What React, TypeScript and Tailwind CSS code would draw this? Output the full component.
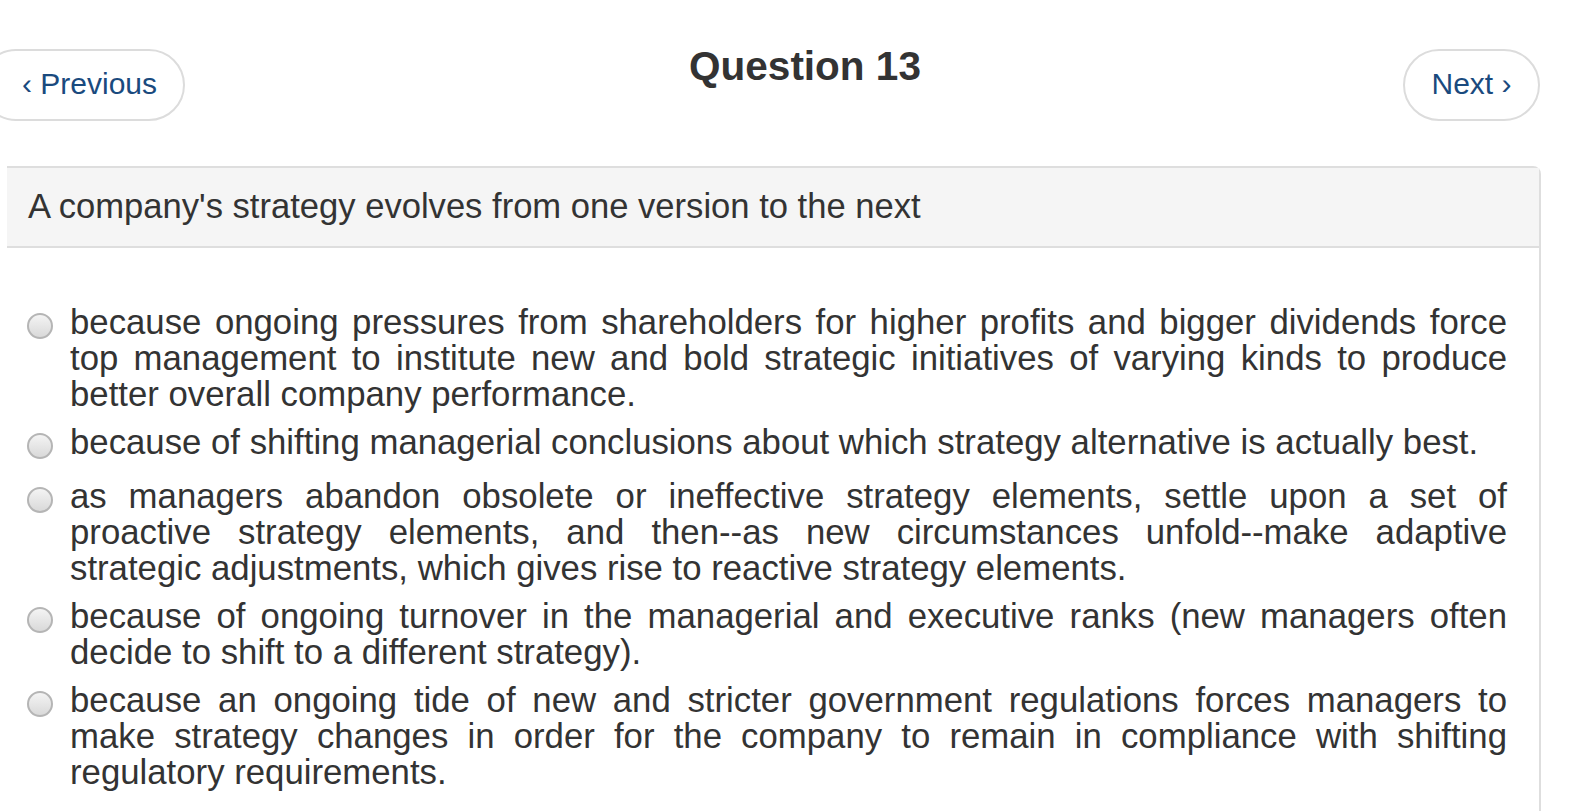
const options = [
  'because ongoing pressures from shareholders for higher profits and bigger dividends force top management to institute new and bold strategic initiatives of varying kinds to produce better overall company performance.',
  'because of shifting managerial conclusions about which strategy alternative is actually best.',
  'as managers abandon obsolete or ineffective strategy elements, settle upon a set of proactive strategy elements, and then--as new circumstances unfold--make adaptive strategic\u00a0adjustments, which gives rise to reactive strategy elements.',
  'because of ongoing turnover in the managerial and executive ranks (new managers often decide to shift to a different strategy).',
  'because an ongoing tide of new and stricter government regulations forces managers to make strategy changes in order for the company to remain in compliance with shifting regulatory requirements.',
]

function Radio() {
  return (
    <span className="mt-[9px] h-[26px] w-[26px] shrink-0 rounded-full border-2 border-[#b5b5b5] bg-gradient-to-b from-[#f4f4f4] to-[#d9d9d9]" />
  )
}

export default function App() {
  return (
    <div
      className="flex h-[811px] w-[1569px] flex-col overflow-hidden bg-white text-[#333]"
      style={{ fontFamily: '"Liberation Sans", Arial, sans-serif' }}
    >
      {/* Header with nav */}
      <div className="flex items-start pt-[49px]">
        <button className="ml-[-20px] flex h-[72px] w-[205px] shrink-0 items-center justify-center rounded-full border-2 border-[#dcdcdc] pb-[4px] pl-[14px] text-[30px] text-[#1a4a7e]">
          ‹ Previous
        </button>
        <h1 className="mt-[-6px] flex-1 pl-[22px] text-center text-[40.5px] font-bold leading-[46px] text-[#333]">
          Question 13
        </h1>
        <button className="mr-[29px] flex h-[72px] w-[137px] shrink-0 items-center justify-center rounded-full border-2 border-[#dcdcdc] pb-[4px] text-[30px] text-[#1a4a7e]">
          Next ›
        </button>
      </div>

      {/* Question panel */}
      <div className="ml-[7px] mr-[28px] mt-[45px] flex-1 rounded-tr-[8px] border-r-2 border-t-2 border-[#dedede]">
        <div className="flex h-[80px] items-center border-b-2 border-[#dedede] bg-[#f5f5f5] px-[21px] text-[34.6px]">
          A company's strategy evolves from one version to the next
        </div>
        <div className="pl-[20px] pr-[32px] pt-[56px]">
          {options.map((text, i) => (
            <label
              key={i}
              className={`flex items-start gap-[17px] ${i === 1 ? 'mb-[18px]' : 'mb-[12px]'}`}
            >
              <Radio />
              <span className="text-justify text-[34.75px] leading-[36px]">{text}</span>
            </label>
          ))}
        </div>
      </div>
    </div>
  )
}
